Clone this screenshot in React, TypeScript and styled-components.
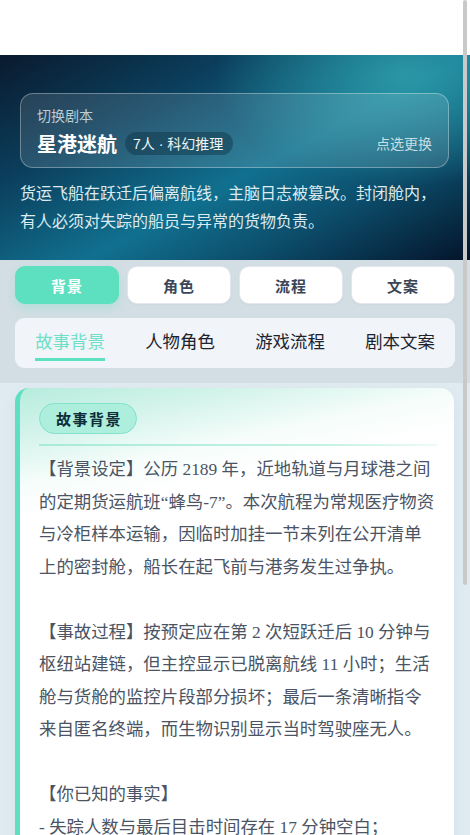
import styled, { createGlobalStyle } from 'styled-components';

const GlobalStyle = createGlobalStyle`
  html, body {
    margin: 0;
    padding: 0;
    height: 100%;
    overflow: hidden;
  }
  body {
    background: #ffffff;
    font-family: "Liberation Sans", "Noto Sans CJK SC", sans-serif;
  }
  * {
    box-sizing: border-box;
  }
`

const Page = styled.div`
  width: 470px;
  min-height: 100vh;
  background: #e0ebf1;
`

const TopBar = styled.div`
  height: 55px;
  background: #ffffff;
`

const Hero = styled.header`
  padding: 38px 21px 24px 20px;
  background:
    radial-gradient(ellipse 190px 110px at 86% 10%, rgba(50, 165, 175, 0.75) 0%, rgba(50, 165, 175, 0) 100%),
    linear-gradient(152deg, #0a1a2e 0%, #0b3f5d 28%, #11708f 55%, #0c4d6b 74%, #04142a 100%);
`

const ScriptCard = styled.div`
  padding: 12px 16px 11px;
  border: 1px solid rgba(255, 255, 255, 0.32);
  border-radius: 13px;
  background: rgba(255, 255, 255, 0.12);
  cursor: pointer;
`

const CardLabel = styled.div`
  font-size: 14px;
  line-height: 20px;
  color: rgba(230, 240, 244, 0.78);
  margin-bottom: 4px;
`

const TitleRow = styled.div`
  display: flex;
  align-items: center;
  height: 26px;
`

const Title = styled.span`
  font-size: 20px;
  font-weight: 700;
  color: #ffffff;
`

const MetaPill = styled.span`
  margin-left: 8px;
  height: 23px;
  padding: 0 10px 0 8px;
  display: inline-flex;
  align-items: center;
  border-radius: 12px;
  background: rgba(12, 45, 62, 0.42);
  color: #eef6f8;
  font-size: 14px;
`

const SwitchHint = styled.span`
  margin-left: auto;
  font-size: 14px;
  color: rgba(228, 240, 244, 0.85);
`

const Synopsis = styled.p`
  margin: 12px 0 0;
  font-size: 16px;
  line-height: 28px;
  color: #dcebf0;
`

const TabDock = styled.nav`
  padding: 6px 15px 15px;
  background: #d3dee4;
`

const SegmentGrid = styled.div`
  display: grid;
  grid-template-columns: repeat(4, 1fr);
  gap: 8px;
`

const SegmentButton = styled.button<{ $active?: boolean }>`
  height: 38px;
  border-radius: 10px;
  font-family: "Liberation Sans", "Noto Sans CJK SC", sans-serif;
  font-size: 15px;
  font-weight: 700;
  letter-spacing: 1px;
  cursor: pointer;
  border: 1px solid ${p => (p.$active ? '#5ce0c0' : '#e1e7ec')};
  background: ${p => (p.$active ? '#5ce0c0' : '#ffffff')};
  color: ${p => (p.$active ? '#ffffff' : '#3a4657')};
  box-shadow: ${p => (p.$active ? '0 4px 10px rgba(92, 224, 192, 0.28)' : '0 1px 2px rgba(0, 0, 0, 0.04)')};
`

const SubTabs = styled.div`
  margin-top: 14px;
  display: flex;
  padding: 12px 0 7px;
  border-radius: 9px;
  background: #f1f4f8;
`

const SubTab = styled.div`
  flex: 1;
  display: flex;
  justify-content: center;
  cursor: pointer;
`

const SubTabLabel = styled.span<{ $active?: boolean }>`
  font-family: "Liberation Serif", "Noto Sans CJK SC", serif;
  font-size: 17.4px;
  line-height: 24px;
  padding-bottom: 4px;
  color: ${p => (p.$active ? '#6fe0c7' : '#1c232d')};
  border-bottom: 3px solid ${p => (p.$active ? '#5ce0c0' : 'transparent')};
`

const ContentArea = styled.main`
  padding: 5px 16px 40px 15px;
`

const StoryCard = styled.section`
  border-left: 5px solid #5ddfc0;
  border-radius: 14px;
  padding: 15px 17px 30px 19px;
  background: linear-gradient(168deg, #b6ecdd 0px, #d9f5ed 55px, #f6fdfb 95px, #ffffff 130px);
  box-shadow: 0 4px 14px rgba(40, 80, 100, 0.06);
`

const Badge = styled.span`
  display: inline-flex;
  align-items: center;
  height: 31px;
  padding: 0 14px 0 16px;
  border-radius: 16px;
  border: 1px solid #82e2ca;
  background: #adeedc;
  color: #0f2e3a;
  font-size: 15px;
  font-weight: 700;
  letter-spacing: 1.5px;
`

const Divider = styled.div`
  height: 2px;
  margin: 10px 0 7px;
  background: linear-gradient(90deg, #a6ebd8 0%, #c2f1e4 70%, rgba(220, 247, 239, 0.5) 100%);
`

const StoryText = styled.div`
  font-family: "Liberation Serif", "Noto Sans CJK SC", serif;
  font-size: 17.4px;
  line-height: 32.5px;
  color: #4a5464;
  white-space: pre-wrap;
`

const ScrollThumb = styled.div`
  position: fixed;
  top: 0;
  left: 463px;
  width: 4px;
  height: 585px;
  border-radius: 2px;
  background: #c9c9c9;
`

const segments = ['背景', '角色', '流程', '文案']
const subTabs = ['故事背景', '人物角色', '游戏流程', '剧本文案']

const story = `【背景设定】公历 2189 年，近地轨道与月球港之间的定期货运航班“蜂鸟-7”。本次航程为常规医疗物资与冷柜样本运输，因临时加挂一节未列在公开清单上的密封舱，船长在起飞前与港务发生过争执。

【事故过程】按预定应在第 2 次短跃迁后 10 分钟与枢纽站建链，但主控显示已脱离航线 11 小时；生活舱与货舱的监控片段部分损坏；最后一条清晰指令来自匿名终端，而生物识别显示当时驾驶座无人。

【你已知的事实】
- 失踪人数与最后目击时间存在 17 分钟空白；
- 密封舱的温控记录在跃迁前后各被修改过一次；
- 主脑日志中有三段时间戳相互矛盾。`

function App() {
  return (
    <>
      <GlobalStyle />
      <Page>
        <TopBar />
        <Hero>
          <ScriptCard>
            <CardLabel>切换剧本</CardLabel>
            <TitleRow>
              <Title>星港迷航</Title>
              <MetaPill>7人 · 科幻推理</MetaPill>
              <SwitchHint>点选更换</SwitchHint>
            </TitleRow>
          </ScriptCard>
          <Synopsis>货运飞船在跃迁后偏离航线，主脑日志被篡改。封闭舱内，有人必须对失踪的船员与异常的货物负责。</Synopsis>
        </Hero>
        <TabDock>
          <SegmentGrid>
            {segments.map((s, i) => <SegmentButton key={s} $active={i === 0}>{s}</SegmentButton>)}
          </SegmentGrid>
          <SubTabs>
            {subTabs.map((s, i) => (
              <SubTab key={s}>
                <SubTabLabel $active={i === 0}>{s}</SubTabLabel>
              </SubTab>
            ))}
          </SubTabs>
        </TabDock>
        <ContentArea>
          <StoryCard>
            <Badge>故事背景</Badge>
            <Divider />
            <StoryText>{story}</StoryText>
          </StoryCard>
        </ContentArea>
      </Page>
      <ScrollThumb />
    </>
  )
}

export default App
